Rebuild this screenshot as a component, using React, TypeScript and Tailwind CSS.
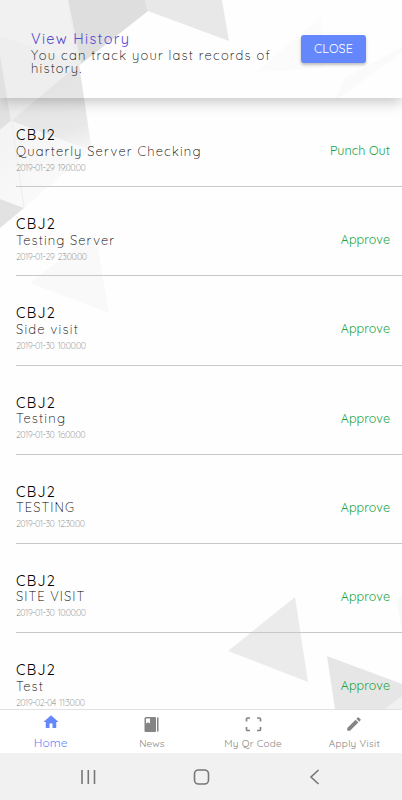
import { MdHome, MdEdit } from "react-icons/md";

const records = [
  { subject: "Quarterly Server Checking", date: "2019-01-29 19:00:00", status: "Punch Out", spacing: "tracking-[1.17px]" },
  { subject: "Testing Server", date: "2019-01-29 23:00:00", status: "Approve", spacing: "tracking-[1.1px]" },
  { subject: "Side visit", date: "2019-01-30 10:00:00", status: "Approve", spacing: "tracking-[1.25px]" },
  { subject: "Testing", date: "2019-01-30 16:00:00", status: "Approve", spacing: "tracking-[1.2px]" },
  { subject: "TESTING", date: "2019-01-30 12:30:00", status: "Approve", spacing: "tracking-[1.05px]" },
  { subject: "SITE VISIT", date: "2019-01-30 10:00:00", status: "Approve", spacing: "tracking-[1.05px]" },
  { subject: "Test", date: "2019-02-04 11:30:00", status: "Approve", spacing: "tracking-[1.1px]" },
];

const Backdrop = () => (
  <svg className="absolute inset-0" width="402" height="709" viewBox="0 0 402 709">
    <defs>
      <linearGradient id="shard" gradientUnits="userSpaceOnUse" x1="60" y1="85" x2="78" y2="152">
        <stop offset="0" stopColor="#e4e4e4" />
        <stop offset="0.65" stopColor="#e8e8e8" />
        <stop offset="1" stopColor="#f6f6f6" />
      </linearGradient>
      <linearGradient id="fold" x1="0" y1="0" x2="1" y2="1">
        <stop offset="0" stopColor="#f3f3f3" />
        <stop offset="1" stopColor="#fdfdfd" />
      </linearGradient>
    </defs>
    <polygon points="0,0 68,0 81,64 11,121 0,57" fill="#eeeeee" />
    <polygon points="0,0 68,0 76,62 0,36" fill="#f1f1f1" />
    <polygon points="68,0 145,0 148,11 81,64" fill="#dedede" />
    <polygon points="145,0 222,0 229,41 148,11" fill="#e8e8e8" />
    <polygon points="79,64 11,121 92,152" fill="url(#shard)" />
    <polygon points="0,55 11,121 0,130" fill="#e1e1e1" />
    <polygon points="11,121 0,130 0,199 24,208 90,150" fill="url(#fold)" />
    <path d="M12 122l12 86" stroke="#eeeeee" />
    <polygon points="0,199 24,208 0,228" fill="#e2e2e2" />
    <polygon points="95,232 30,283 109,313" fill="#f9f9f9" />
    <polygon points="321,17 256,72 324,68" fill="#fbfbfb" />
    <polygon points="402,47 345,78 336,100 402,52" fill="#fafafa" />
    <polygon points="295,597 228,651 308,682" fill="#ebebeb" />
    <polygon points="397,600 402,596 402,632" fill="#f8f8f8" />
    <polygon points="327,656 402,684 402,709 335,709" fill="#e6e6e6" />
    <polygon points="402,696 385,709 402,709" fill="#f1f1f1" />
  </svg>
);

const App = () => {
  return (
    <div className="relative w-[402px] h-[800px] overflow-hidden bg-[#fefefe] font-['Quicksand','Lato',sans-serif] flex flex-col">
      <Backdrop />
      <header className="relative h-[98px] shrink-0 flex justify-between pl-[31px] pr-9 pt-[31px] shadow-[0_3px_14px_rgba(0,0,0,0.25)]">
        <div className="w-[255px]">
          <h1 className="text-[14.5px] leading-4 tracking-[1.3px] text-[#554bd0]">View History</h1>
          <p className="mt-[2px] text-[13px] leading-[13px] tracking-[1.2px] font-light text-black">
            You can track your last records of history.
          </p>
        </div>
        <button className="mt-1 h-7 w-[65px] rounded-[3px] bg-[#6488fb] text-white text-[12.5px] tracking-[0.1px] pb-0.5 shadow-[0_2px_3px_rgba(0,0,0,0.25)]">
          CLOSE
        </button>
      </header>

      <main className="relative h-[611px] shrink-0 overflow-hidden pl-4">
        {records.map((record, i) => (
          <div key={i} className="h-[89.2px] flex justify-between border-b border-[#c8c8c8] pt-[29px] pr-3">
            <div>
              <h2 className="text-[14.5px] leading-4 tracking-[1.2px] text-black">CBJ2</h2>
              <h3 className={`-mt-[0.5px] text-[13px] leading-4 font-light text-black ${record.spacing}`}>{record.subject}</h3>
              <p className="mt-[3px] text-[9px] leading-3 tracking-[-0.58px] [word-spacing:1.5px] font-light text-[#888]">{record.date}</p>
            </div>
            <span className="mt-[15px] text-[12.5px] leading-4 tracking-[0.05px] text-[#17a340]">{record.status}</span>
          </div>
        ))}
      </main>

      <nav className="relative h-11 w-[405px] shrink-0 grid grid-cols-4 border-t border-[#e2e2e2] bg-white text-[10px] text-[#858585]">
        <div className="flex flex-col items-center text-[#6488fb]">
          <MdHome className="mt-[3px] size-[18px]" />
          <span className="mt-1.5 text-[12px] leading-3">Home</span>
        </div>
        <div className="flex flex-col items-center">
          <svg className="mt-1.5 h-[17px] w-[15px]" viewBox="0 0 15 17" fill="currentColor">
            <path d="M2 1h9a1 1 0 0 1 1 1v13a1 1 0 0 1-1 1H1.500a1 1 0 0 1-1-1V2.500A1.500 1.500 0 0 1 2 1zM2 2.500v5l2-1.200 2 1.200v-5z" fillRule="evenodd" />
            <rect x="13" y="1.500" width="1.500" height="14" />
          </svg>
          <span className="mt-[5px] leading-3">News</span>
        </div>
        <div className="flex flex-col items-center">
          <svg className="mt-1.5 size-[17px]" viewBox="0 0 17 17" fill="none" stroke="currentColor" strokeWidth="1.700">
            <path d="M1.500 5.500V3a1 1 0 0 1 1-1H5M12 2h2.500a1 1 0 0 1 1 1v2.500M15.500 11v2.500a1 1 0 0 1-1 1H12M5 14.500H2.500a1 1 0 0 1-1-1V11" />
          </svg>
          <span className="mt-[5px] leading-3 tracking-[0.25px]">My Qr Code</span>
        </div>
        <div className="flex flex-col items-center">
          <MdEdit className="mt-[5px] size-[18px]" />
          <span className="mt-[5px] leading-3 tracking-[0.3px]">Apply Visit</span>
        </div>
      </nav>

      <footer className="relative flex-1 bg-[#f1f1f1] text-[#777]">
        <svg width="402" height="47" viewBox="0 0 402 47" fill="none" stroke="currentColor" strokeWidth="1.600">
          <path d="M82 17v14M88.300 17v14M94.500 17v14M318.500 17l-7.500 7 7.500 7" />
          <rect x="194.500" y="17" width="14" height="14" rx="4" />
        </svg>
      </footer>
    </div>
  );
};

export default App;
